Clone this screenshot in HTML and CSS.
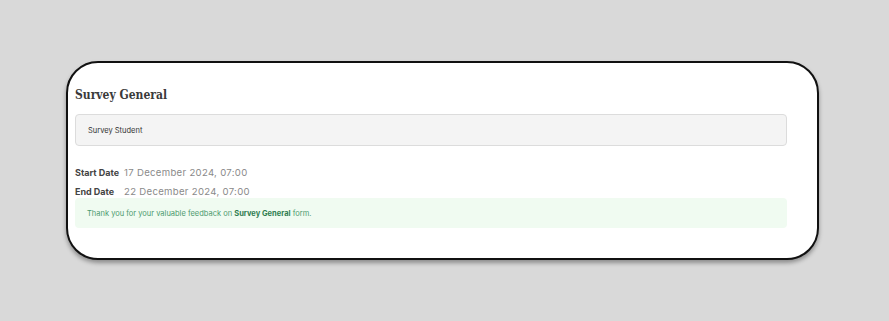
FILE: index.html
```html
<!DOCTYPE html>
<html>
<head>
<meta charset="utf-8">
<link rel="stylesheet" href="styles.css">
</head>
<body>
<div class="card">
  <h2 class="title">Survey General</h2>
  <div class="field"><span>Survey Student</span></div>
  <div class="dates">
    <span class="label">Start Date</span><span class="value">17 December 2024, 07:00</span>
    <span class="label">End Date</span><span class="value">22 December 2024, 07:00</span>
  </div>
  <div class="notice"><span>Thank you for your valuable feedback on <b>Survey General</b> form.</span></div>
</div>
</body>
</html>
```
FILE: styles.css
```css
html, body { margin: 0; padding: 0; }
body {
  background: #d9d9d9;
  width: 889px;
  height: 321px;
  padding: 61px 0 0 66px;
  box-sizing: border-box;
  font-family: Inter, "Open Sans", sans-serif;
}
.card {
  width: 753px;
  height: 199px;
  box-sizing: border-box;
  background: #fff;
  border: 2px solid #111;
  border-radius: 32px;
  box-shadow: 0 3px 4px rgba(0,0,0,0.35);
  padding: 23px 30px 0 7px;
}
.title {
  margin: 0;
  font-family: "DejaVu Serif Condensed", "DejaVu Serif", serif;
  font-stretch: condensed;
  font-size: 12px;
  font-weight: bold;
  color: #3a3a3a;
  line-height: 18px;
}
.field {
  margin-top: 10px;
  height: 32px;
  box-sizing: border-box;
  background: #f4f4f4;
  border: 1px solid #dcdcdc;
  border-radius: 4px;
  padding-left: 12px;
  display: flex;
  align-items: center;
  font-size: 7.5px;
  color: #333;
}
.dates {
  margin-top: 20px;
  display: grid;
  grid-template-columns: 49px auto;
  row-gap: 6px;
  justify-content: start;
  line-height: 13px;
}
.label {
  font-size: 9px;
  font-weight: 700;
  color: #444;
}
.value {
  font-size: 9.6px;
  color: #8a8a8a;
  letter-spacing: 0.3px;
}
.notice {
  margin-top: 0;
  height: 30px;
  background: #f0fbf1;
  border-radius: 4px;
  padding-left: 12px;
  display: flex;
  align-items: center;
  font-size: 7.5px;
  color: #4c9a6e;
}
.notice b { color: #2f7d50; font-weight: 700; }
```
